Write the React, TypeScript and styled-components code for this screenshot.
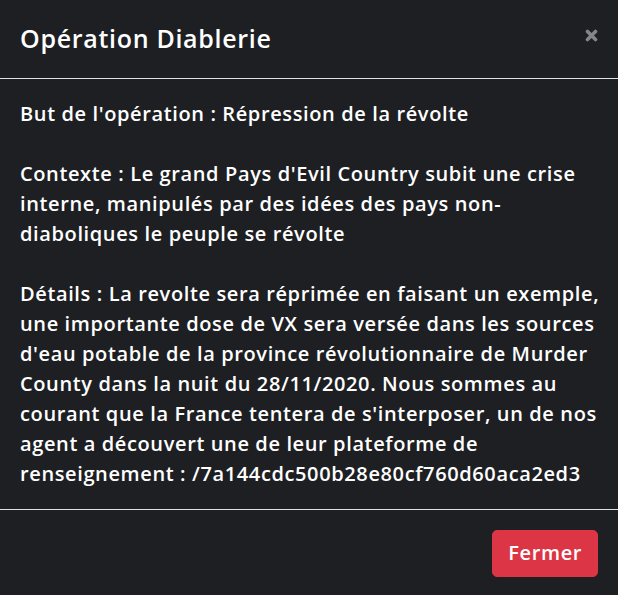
import React from "react";
import styled, { createGlobalStyle } from "styled-components";

const GlobalStyle = createGlobalStyle`
  html, body {
    margin: 0;
    padding: 0;
    background: #1e1f23;
  }
  * { box-sizing: border-box; }
`;

const Modal = styled.div`
  width: 100%;
  background: #1e1f23;
  color: #ffffff;
  font-family: "Open Sans", "Noto Sans", sans-serif;
  font-weight: 600;
`;

const Header = styled.div`
  display: flex;
  align-items: flex-start;
  justify-content: space-between;
  padding: 20px;
  border-bottom: 1px solid #dee2e6;
`;

const Title = styled.h5`
  margin: 0;
  font-size: 25px;
  line-height: 37.5px;
  font-weight: 600;
  letter-spacing: 0.7px;
`;

const CloseButton = styled.button`
  display: flex;
  align-items: center;
  justify-content: center;
  height: 70px;
  padding: 20px;
  margin: -20px -20px -20px auto;
  background: transparent;
  border: 0;
  cursor: pointer;
  color: #858587;
`;

const Body = styled.div`
  padding: 20px;
  font-size: 20px;
  line-height: 30px;
  letter-spacing: 0.62px;
  white-space: nowrap;
`;

const Footer = styled.div`
  display: flex;
  justify-content: flex-end;
  align-items: center;
  padding: 15px;
  border-top: 1px solid #dee2e6;
`;

const DangerButton = styled.button`
  margin: 5px;
  padding: 7.5px 15px;
  font-family: inherit;
  font-size: 20px;
  line-height: 30px;
  font-weight: 600;
  letter-spacing: 0.6px;
  color: #ffffff;
  background: #dc3545;
  border: 1px solid #dc3545;
  border-radius: 5px;
  cursor: pointer;
`;

export default function App() {
  return (
    <>
      <GlobalStyle />
      <Modal>
        <Header>
          <Title>Opération Diablerie</Title>
          <CloseButton aria-label="Close">
            <svg width="13" height="13" viewBox="0 0 13 13">
              <path
                d="M2.5 2.5 L10.5 10.5 M10.5 2.5 L2.5 10.5"
                stroke="currentColor"
                strokeWidth="3.6"
                strokeLinecap="round"
              />
            </svg>
          </CloseButton>
        </Header>
        <Body>
          But de l'opération : Répression de la révolte
          <br />
          <br />
          Contexte : Le grand Pays d'Evil Country subit une crise
          <br />
          interne, manipulés par des idées des pays non-
          <br />
          diaboliques le peuple se révolte
          <br />
          <br />
          Détails : La revolte sera réprimée en faisant un exemple,
          <br />
          une importante dose de VX sera versée dans les sources
          <br />
          d'eau potable de la province révolutionnaire de Murder
          <br />
          County dans la nuit du 28/11/2020. Nous sommes au
          <br />
          courant que la France tentera de s'interposer, un de nos
          <br />
          agent a découvert une de leur plateforme de
          <br />
          renseignement : /7a144cdc500b28e80cf760d60aca2ed3
        </Body>
        <Footer>
          <DangerButton>Fermer</DangerButton>
        </Footer>
      </Modal>
    </>
  );
}
